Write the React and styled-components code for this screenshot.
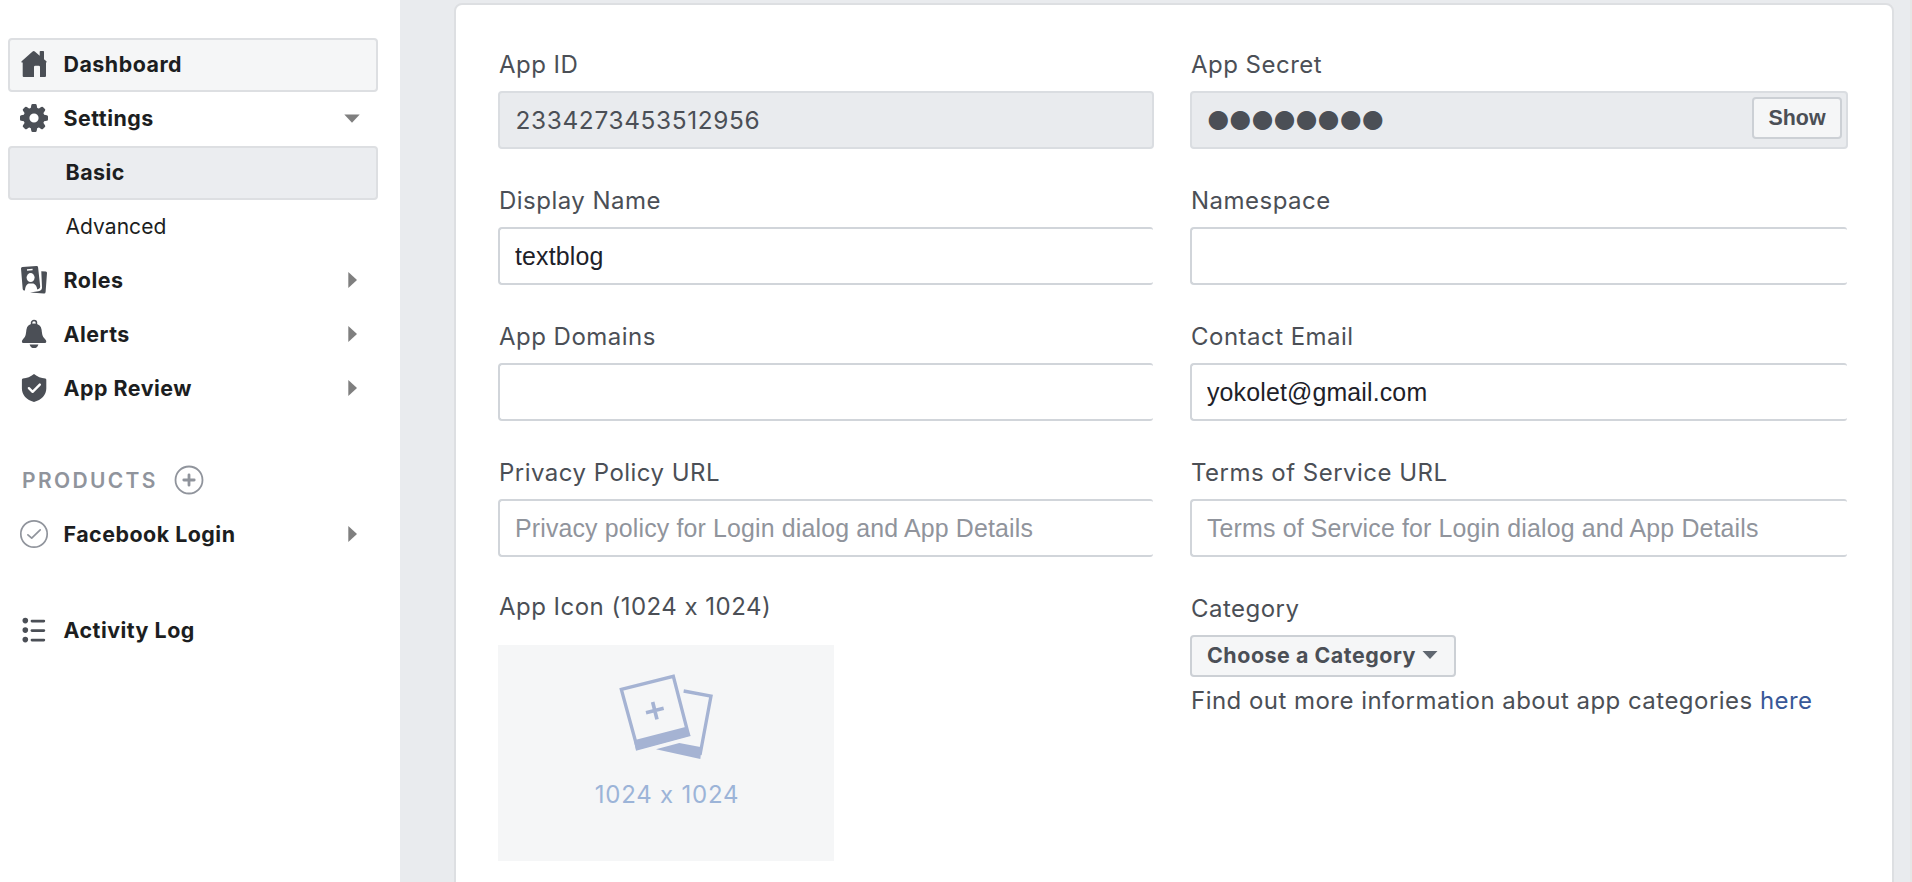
import React from 'react';
import styled, { createGlobalStyle, css } from 'styled-components';

const GlobalStyle = createGlobalStyle`
  *, *::before, *::after { box-sizing: border-box; }
  html, body, #root { height: 100%; }
  body { margin: 0; overflow: hidden; background: #fff; }
`;

const uiFont = css`
  font-family: Inter, 'Liberation Sans', sans-serif;
`;
const inputFont = css`
  font-family: 'Liberation Sans', Arial, sans-serif;
`;

const Page = styled.div`
  ${uiFont}
  display: flex;
  height: 882px;
  overflow: hidden;
  color: #4b4f56;
`;

const Sidebar = styled.nav`
  flex: 0 0 400px;
  padding: 38px 22px 0 8px;
  background: #fff;
`;

const NavItem = styled.a`
  display: flex;
  align-items: center;
  height: 54px;
  margin-top: ${(p) => p.$gap || 0}px;
  padding: 0 16px 0 10px;
  border: 2px solid ${(p) => (p.$tone ? '#dddfe2' : 'transparent')};
  border-radius: 4px;
  background: ${(p) => (p.$tone === 'active' ? '#ebedf0' : p.$tone === 'hover' ? '#f5f6f7' : 'transparent')};
  text-decoration: none;
`;

const NavIcon = styled.svg`
  flex: none;
  width: 28px;
  height: 28px;
  margin: 0 15px 2px 0;
  overflow: visible;
`;

const NavText = styled.span`
  flex: 1;
  padding-bottom: 2px;
  padding-left: ${(p) => (p.$sub ? 45.5 : 0.5)}px;
  color: #1c1e21;
  font-size: ${(p) => (p.$light ? 21 : 21.4)}px;
  font-weight: ${(p) => (p.$light ? 400 : 700)};
  letter-spacing: ${(p) => (p.$light ? 0.05 : 0.5)}px;
  white-space: nowrap;
`;

const Caret = styled.svg`
  flex: none;
  width: 16px;
  height: 16px;
  margin-bottom: 2px;
`;

const SectionTitle = styled.div`
  display: flex;
  align-items: center;
  gap: 17px;
  height: 40px;
  margin-top: 44px;
  padding-left: 14px;
  color: #90949c;
  font-size: 21px;
  font-weight: 600;
  letter-spacing: 2.35px;

  ${NavIcon} {
    margin-bottom: 0;
  }
`;

const Main = styled.main`
  flex: 1;
  padding: 3px 16px 0 54px;
  border-right: 2px solid #e6e6e6;
  background: #e9ebee;
`;

const Card = styled.section`
  height: 900px;
  padding: 44px 44px 0 42px;
  border: 2px solid #dddfe2;
  border-radius: 8px;
  background: #fff;
`;

const FormGrid = styled.div`
  display: grid;
  grid-template-columns: 656px 658px;
  column-gap: 36px;
  row-gap: 36px;
`;

const Field = styled.div`
  display: flex;
  flex-direction: column;
  align-items: ${(p) => (p.$fit ? 'flex-start' : 'stretch')};
  margin-top: ${(p) => p.$shift || 0}px;
`;

const Label = styled.label`
  height: 30px;
  margin-bottom: ${(p) => p.$space || 12}px;
  padding-left: 1px;
  font-size: 24px;
  line-height: 31px;
  letter-spacing: 0.48px;
  white-space: nowrap;
`;

const LockedValue = styled.div`
  display: flex;
  align-items: center;
  justify-content: space-between;
  height: 58px;
  padding: 0 4px 0 15.5px;
  border: 2px solid #dadde1;
  border-radius: 4px;
  background: #e9ebee;
  font-size: 24.4px;
  letter-spacing: 0.65px;
`;

const Dots = styled.span`
  padding-bottom: 3px;
  font-family: 'DejaVu Sans', sans-serif;
  font-size: 25px;
  line-height: 40px;
  letter-spacing: 0.25px;
`;

const TextInput = styled.input`
  ${inputFont}
  height: 58px;
  width: calc(100% - 1px);
  padding: 1px 15px 0;
  border: 2px solid #d1d5da;
  border-right-width: 0;
  border-radius: 4px 3px 3px 4px;
  outline: none;
  background: #fff;
  color: #1d2129;
  font-size: 24.9px;
  letter-spacing: 0.16px;
  &::placeholder { color: #90949c; opacity: 1; }
`;

const Button = styled.button`
  display: flex;
  align-items: center;
  height: 42px;
  padding: 0 15px;
  border: 2px solid #ccd0d5;
  border-radius: 4px;
  background: #f5f6f7;
  color: #4b4f56;
  font-weight: 700;
  font-size: 21.4px;
  white-space: nowrap;
  ${uiFont}
`;

const ShowButton = styled(Button)`
  ${inputFont}
  justify-content: center;
  width: 90px;
  margin-bottom: 4px;
`;

const CategoryButton = styled(Button)`
  justify-content: space-between;
  width: 266px;
  padding: 0 16px 2px 15px;
  letter-spacing: 0.54px;
`;

const Hint = styled.p`
  margin: 8px 0 0 1px;
  font-size: 24px;
  line-height: 31px;
  letter-spacing: 0.47px;
  white-space: nowrap;
`;

const Link = styled.a`
  color: #385898;
  text-decoration: none;
`;

const Upload = styled.div`
  display: flex;
  flex-direction: column;
  align-items: center;
  width: 336px;
  height: 216px;
  padding-top: 27px;
  background: #f5f6f7;
`;

const PhotoIcon = styled.svg`
  width: 98.67px;
  height: 89.33px;
`;

const UploadText = styled.span`
  margin-top: 18px;
  padding-left: 2px;
  color: #9cb4d8;
  font-size: 24px;
  line-height: 31px;
  letter-spacing: 0.8px;
`;

const dark = '#4b4f56';

const icons = {
  home: (
    <path fill={dark} d="M1.6 11.2 12.6 1.6Q13.7.6 14.8 1.6L19.7 5.8V1.8Q19.7 1 20.5 1H23.3Q24 1 24 1.8V9.2L26.4 11.2Q27.2 12.6 26 12.6V26Q26 27 25 27H20V17Q20 15.8 18.8 15.8H15.2Q14 15.8 14 17V27H3.7Q2.7 27 2.7 26V12.6H2Q.8 12.4 1.6 11.2Z" />
  ),
  gear: (
    <g fill={dark}>
      <circle cx="14" cy="14" r="7.6" fill="none" stroke={dark} strokeWidth="6" />
      {[0, 45, 90, 135, 180, 225, 270, 315].map((a) => (
        <path key={a} d="M10.6 5 11.3 1.2Q11.5 0 12.6 0H15.4Q16.5 0 16.7 1.2L17.4 5Z" transform={`rotate(${a} 14 14)`} />
      ))}
    </g>
  ),
  roles: (
    <g>
      <path fill={dark} d="M2.4 1.1 16.4.1Q18 0 18.1 1.5L20.2 20.5Q20.3 22.3 18.6 23L17.2 23.6Q16.8 18.8 13.4 17.4H8.6Q5.2 19 4.9 24.6L4 24.5Q2.8 24.3 2.7 23L1 2.6Q1 1.2 2.4 1.1Z" />
      <path fill="none" stroke="#fff" strokeWidth="1.5" d="M7 4.1 12.6 3.6" />
      <ellipse cx="10.6" cy="11.6" rx="4" ry="4.5" fill="#fff" />
      <path fill={dark} d="M21.3 5.3 25.8 5.6Q27.1 5.8 27 7L25.6 26Q25.4 27.8 23.8 27.6L10 26.5 18.4 25.2Q21.9 24.5 22 21.4Z" />
    </g>
  ),
  bell: (
    <g fill={dark}>
      <circle cx="14" cy="3" r="2.5" fill="none" stroke={dark} strokeWidth="1.5" />
      <path d="M14 3.6Q20.8 3.8 21.6 9.8C22.2 15.6 22.8 17 25.2 19.2Q26.4 20.4 26.3 21.8Q26.2 23 24.8 23H3.3Q2 23 1.9 21.8Q1.8 20.4 3 19.2C5.4 17 5.8 15.6 6.4 9.8Q7.2 3.8 14 3.6Z" />
      <path d="M9.6 24.4H18.4Q17.4 28 14 28T9.6 24.4Z" />
    </g>
  ),
  shield: (
    <g>
      <path fill={dark} d="M14 0Q19 4 25.3 4.6Q26.3 4.8 26.3 5.8V14.5C26.3 21 21.5 26 14 28C6.6 26 1.9 21 1.9 14.5V5.8Q1.9 4.8 2.9 4.6Q9 4 14 0Z" />
      <path fill="none" stroke="#fff" strokeWidth="2.4" strokeLinecap="round" strokeLinejoin="round" d="M8.9 14.2 12.6 17.8 19.8 10.6" />
    </g>
  ),
  check: (
    <g fill="none" stroke="#90949c" strokeWidth="1.7" strokeLinecap="round" strokeLinejoin="round">
      <circle cx="14" cy="14" r="13.2" />
      <path d="M7.9 14.8 11.7 18.2 20.2 9.8" />
    </g>
  ),
  plus: (
    <g fill="none" stroke="#90949c" strokeLinecap="round">
      <circle cx="14" cy="14" r="13.5" strokeWidth="1.8" />
      <path strokeWidth="2.8" d="M14 8.8V19.2M8.8 14H19.2" />
    </g>
  ),
  list: (
    <g fill={dark}>
      {[4.6, 14.1, 23.6].map((y) => (
        <g key={y}>
          <circle cx="5.3" cy={y} r="2.8" />
          <rect x="10.6" y={y - 0.9} width="14.6" height="2.7" rx="1.3" />
        </g>
      ))}
    </g>
  ),
};

const Icon = ({ name }) => <NavIcon viewBox="0 0 28 28">{icons[name]}</NavIcon>;

const RowCaret = ({ open }) => (
  <Caret viewBox="0 0 16 16">
    <path fill="#7f7f7f" d={open ? 'M0.3 4.4H15.7L8 12.8Z' : 'M4.3 0 13 8 4.3 16Z'} />
  </Caret>
);

const Item = ({ icon, label, caret, ...rest }) => (
  <NavItem {...rest}>
    <Icon name={icon} />
    <NavText>{label}</NavText>
    {caret && <RowCaret open={caret === 'open'} />}
  </NavItem>
);

const TextField = ({ label, value, placeholder }) => (
  <Field>
    <Label>{label}</Label>
    <TextInput defaultValue={value} placeholder={placeholder} />
  </Field>
);

export default function App() {
  return (
    <>
      <GlobalStyle />
      <Page>
        <Sidebar>
          <Item icon="home" label="Dashboard" $tone="hover" />
          <Item icon="gear" label="Settings" caret="open" />
          <NavItem $tone="active"><NavText $sub>Basic</NavText></NavItem>
          <NavItem><NavText $sub $light>Advanced</NavText></NavItem>
          <Item icon="roles" label="Roles" caret="closed" />
          <Item icon="bell" label="Alerts" caret="closed" />
          <Item icon="shield" label="App Review" caret="closed" />
          <SectionTitle>PRODUCTS <Icon name="plus" /></SectionTitle>
          <Item icon="check" label="Facebook Login" caret="closed" $gap={8} />
          <Item icon="list" label="Activity Log" $gap={42} />
        </Sidebar>
        <Main>
          <Card>
            <FormGrid>
              <Field>
                <Label>App ID</Label>
                <LockedValue>2334273453512956</LockedValue>
              </Field>
              <Field>
                <Label>App Secret</Label>
                <LockedValue>
                  <Dots>●●●●●●●●</Dots>
                  <ShowButton>Show</ShowButton>
                </LockedValue>
              </Field>
              <TextField label="Display Name" value="textblog" />
              <TextField label="Namespace" />
              <TextField label="App Domains" />
              <TextField label="Contact Email" value="yokolet@gmail.com" />
              <TextField label="Privacy Policy URL" placeholder="Privacy policy for Login dialog and App Details" />
              <TextField label="Terms of Service URL" placeholder="Terms of Service for Login dialog and App Details" />
              <Field $fit $shift={-2}>
                <Label $space={24}>App Icon (1024 x 1024)</Label>
                <Upload>
                  <PhotoIcon viewBox="380 276 296 268">
                    <g fill="none" stroke="#a5b3d3">
                      <path strokeWidth="10" d="M393 328 549 289 594 463 441 504Z" />
                      <path strokeWidth="10" d="M580 333 662 348 629 525" />
                      <path strokeWidth="11" d="M467 398 520 385M487 366 500 418" />
                    </g>
                    <path fill="#a5b3d3" d="M431 481 588 440 601 468 437 512Z" />
                    <path fill="#a5b3d3" d="M497 508 567 489 634 502 630 537Z" />
                  </PhotoIcon>
                  <UploadText>1024 x 1024</UploadText>
                </Upload>
              </Field>
              <Field $fit>
                <Label>Category</Label>
                <CategoryButton>
                  Choose a Category
                  <Caret viewBox="0 0 16 16"><path fill="#606770" d="M0.5 5H15.5L8 13Z" /></Caret>
                </CategoryButton>
                <Hint>Find out more information about app categories <Link>here</Link></Hint>
              </Field>
            </FormGrid>
          </Card>
        </Main>
      </Page>
    </>
  );
}
